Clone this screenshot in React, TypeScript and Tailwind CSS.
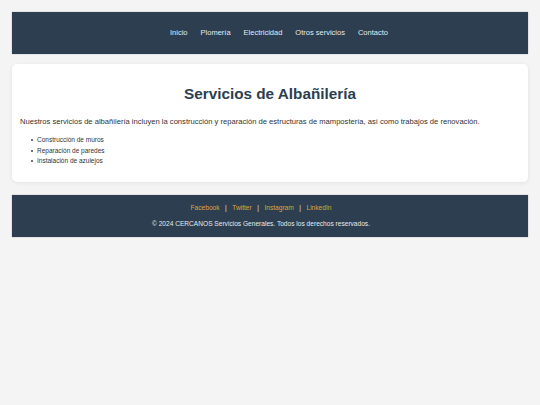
export default function App() {
  const links = ["Inicio", "Plomería", "Electricidad", "Otros servicios", "Contacto"];
  const social = ["Facebook", "Twitter", "Instagram", "LinkedIn"];
  const items = ["Construcción de muros", "Reparación de paredes", "Instalación de azulejos"];

  return (
    <div className="min-h-[405px] bg-[#f4f4f4] p-3 font-['Liberation_Sans',Arial,sans-serif]">
      <header className="flex h-[42px] items-center justify-center bg-[#2c3e50] shadow-[0_0_1px_rgba(0,0,0,0.4)]">
        <nav className="flex items-center gap-[13px] pl-[18px] text-[7.5px] text-[#e6e9ec]">
          {links.map((l) => (
            <a key={l} href="#" className="leading-none">
              {l}
            </a>
          ))}
        </nav>
      </header>

      <main className="mt-[10px] rounded-[5px] bg-white px-2 pt-[19px] pb-[15px] shadow-[0_1px_4px_rgba(0,0,0,0.08)]">
        <h1 className="text-center text-[15.3px] font-bold leading-[22px] text-[#2c3e50]">
          Servicios de Albañilería
        </h1>
        <p className="mt-[11px] text-[7.6px] leading-[12px] text-[#333]">
          Nuestros servicios de albañilería incluyen la construcción y reparación de estructuras de mampostería, así como trabajos de renovación.
        </p>
        <ul className="mt-[7px] pl-[11px] text-[6.5px] leading-[10.5px] text-[#333]">
          {items.map((it) => (
            <li key={it} className="flex items-center gap-[4px]">
              <span className="h-[2px] w-[2px] rounded-full bg-[#444]" />
              {it}
            </li>
          ))}
        </ul>
      </main>

      <footer className="mt-[13px] flex h-[42px] flex-col items-center justify-center gap-[9px] bg-[#2c3e50] pt-[2px] pr-[18px] text-[6.6px] leading-none shadow-[0_0_1px_rgba(0,0,0,0.4)]">
        <div className="flex items-center text-[#e0e4e8]">
          {social.map((s, i) => (
            <span key={s} className="flex items-center">
              {i > 0 && <span className="px-[5.5px]">|</span>}
              <a href="#" className="text-[#dfa53a]">
                {s}
              </a>
            </span>
          ))}
        </div>
        <p className="text-[#e6e9ec]">© 2024 CERCANOS Servicios Generales. Todos los derechos reservados.</p>
      </footer>
    </div>
  );
}
